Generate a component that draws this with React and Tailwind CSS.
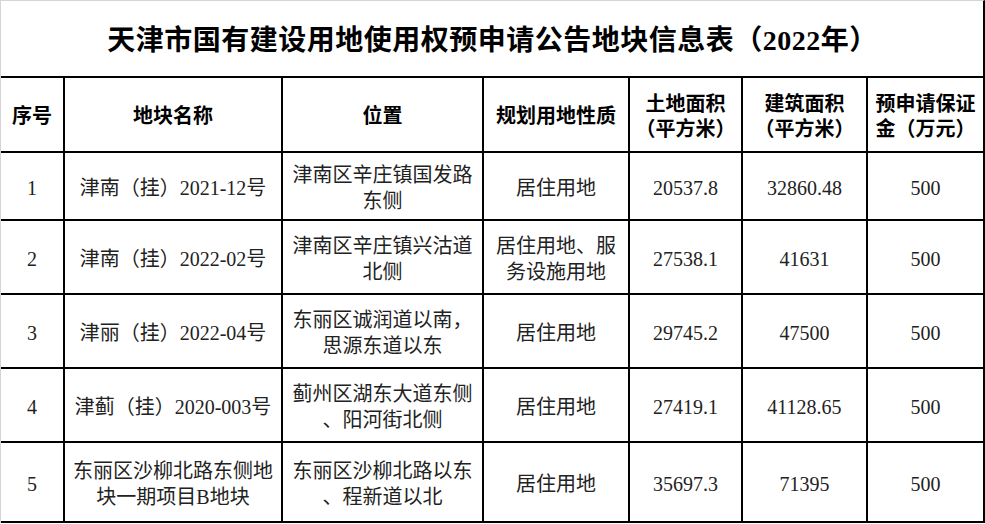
import React from "react";

const font = { fontFamily: '"Liberation Serif", "Noto Sans CJK SC", serif' };

const headers = [
  ["序号"],
  ["地块名称"],
  ["位置"],
  ["规划用地性质"],
  ["土地面积", "（平方米）"],
  ["建筑面积", "（平方米）"],
  ["预申请保证", "金（万元）"],
];

const rows = [
  {
    h: "h-[66px]",
    cells: [["1"], ["津南（挂）2021-12号"], ["津南区辛庄镇国发路", "东侧"], ["居住用地"], ["20537.8"], ["32860.48"], ["500"]],
  },
  {
    h: "h-[72px]",
    cells: [["2"], ["津南（挂）2022-02号"], ["津南区辛庄镇兴沽道", "北侧"], ["居住用地、服", "务设施用地"], ["27538.1"], ["41631"], ["500"]],
  },
  {
    h: "h-[72px]",
    cells: [["3"], ["津丽（挂）2022-04号"], ["东丽区诚润道以南，", "思源东道以东"], ["居住用地"], ["29745.2"], ["47500"], ["500"]],
  },
  {
    h: "h-[72px]",
    cells: [["4"], ["津蓟（挂）2020-003号"], ["蓟州区湖东大道东侧", "、阳河街北侧"], ["居住用地"], ["27419.1"], ["41128.65"], ["500"]],
  },
  {
    h: "h-[78px]",
    cells: [["5"], ["东丽区沙柳北路东侧地", "块一期项目B地块"], ["东丽区沙柳北路以东", "、程新道以北"], ["居住用地"], ["35697.3"], ["71395"], ["500"]],
  },
];

function Cell({ lines, bold, h }) {
  return (
    <div className={`flex flex-col items-center justify-center bg-white pt-[4px] text-center ${h}`}>
      {lines.map((t, i) => (
        <div
          key={i}
          className={`whitespace-nowrap text-[20px] ${bold ? "font-bold leading-[25px] text-black" : "leading-[26px] text-[#222]"}`}
        >
          {t}
        </div>
      ))}
    </div>
  );
}

export default function App() {
  return (
    <div className="h-[524px] w-[985px] overflow-hidden bg-white" style={font}>
      <div className="w-[985px] border-l border-t border-r-2 border-l-[#d4d4d4] border-t-[#d4d4d4] border-r-black">
        <div className="flex h-[75px] items-center justify-center pl-[1px]">
          <h1 className="pt-[4px] text-[28px] font-bold leading-none tracking-[0.5px] text-black">
            天津市国有建设用地使用权预申请公告地块信息表（2022年）
          </h1>
        </div>
        <div className="grid grid-cols-[62px_216px_199px_144px_111px_123px_115px] gap-[2px] border-t-2 border-b-2 border-black bg-black">
          {headers.map((lines, i) => (
            <Cell key={i} lines={lines} bold h="h-[73px]" />
          ))}
          {rows.map((r, ri) =>
            r.cells.map((lines, ci) => <Cell key={`${ri}-${ci}`} lines={lines} h={r.h} />)
          )}
        </div>
      </div>
    </div>
  );
}
